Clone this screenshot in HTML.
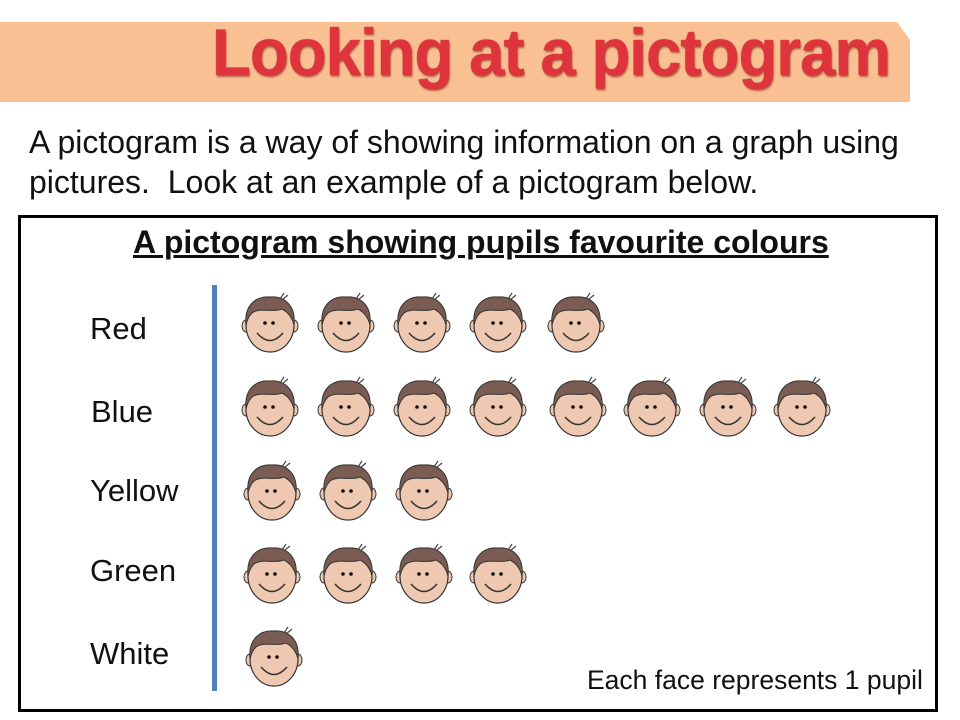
<!DOCTYPE html>
<html><head><meta charset="utf-8"><style>
body{margin:0;width:960px;height:720px;background:#fff;position:relative;overflow:hidden;font-family:"Liberation Sans",Arial,sans-serif}
.ban{position:absolute;left:0;top:22px;width:910px;height:80px;background:#f9c193;clip-path:polygon(0 0,897px 0,910px 18px,910px 80px,0 80px)}
.title{position:absolute;left:212px;top:14px;font-family:"Liberation Sans",sans-serif;font-weight:bold;font-size:66px;color:#e0343c;letter-spacing:-1px;text-shadow:0 0 1px #a01018,1px 2px 2px rgba(120,0,0,.5);transform:scaleX(0.963);transform-origin:left;white-space:nowrap}
.intro{position:absolute;left:29px;top:122px;font-size:32px;line-height:40px;color:#111;white-space:nowrap}
.box{position:absolute;left:18px;top:215px;width:914px;height:491px;border:3px solid #000}
.ct{position:absolute;left:133px;top:224px;font-size:32px;font-weight:bold;text-decoration:underline;color:#111;white-space:nowrap}
.lab{position:absolute;font-size:31px;color:#111}
.vl{position:absolute;left:212px;top:285px;width:5px;height:406px;background:#4f81bd}
.note{position:absolute;left:587px;top:665px;font-size:26.5px;color:#111;white-space:nowrap}
svg.f{position:absolute;width:60px;height:62px}
</style></head><body>
<div class="ban"></div>
<div class="title">Looking at a pictogram</div>
<div class="intro">A pictogram is a way of showing information on a graph using<br>pictures.&nbsp; Look at an example of a pictogram below.</div>
<div class="box"></div>
<div class="ct">A pictogram showing pupils favourite colours</div>
<div class="vl"></div>
<div class="lab" style="left:90px;top:311px">Red</div>
<div class="lab" style="left:91px;top:394px">Blue</div>
<div class="lab" style="left:90px;top:473px">Yellow</div>
<div class="lab" style="left:90px;top:553px">Green</div>
<div class="lab" style="left:90px;top:636px">White</div>
<div class="note">Each face represents 1 pupil</div>
<svg width="0" height="0" style="position:absolute"><defs><g id="fc">
<ellipse cx="6" cy="35" rx="4" ry="6" fill="#eec8b0" stroke="#333" stroke-width="1"/>
<ellipse cx="54" cy="35" rx="4" ry="6" fill="#eec8b0" stroke="#333" stroke-width="1"/>
<ellipse cx="30" cy="34" rx="24" ry="27" fill="#eec8b0" stroke="#333" stroke-width="1.2"/>
<path d="M6 34 C4 14 16 5 30 6 C44 5 56 14 54 34 C52 26 48 21 42 18 C32 22 20 16 12 22 C9 25 7 29 6 34Z" fill="#7b5c52" stroke="#333" stroke-width="1"/>
<path d="M40 8 L44 2 M42 9 L48 4" stroke="#444" stroke-width="1.2"/>
<circle cx="25" cy="32" r="1.8" fill="#111"/><circle cx="33" cy="32" r="1.8" fill="#111"/>
<path d="M17 42 Q30 57 43 42" fill="none" stroke="#333" stroke-width="1.5"/>
</g></defs></svg>
<svg class="f" style="left:240px;top:291px" viewBox="0 0 60 62"><use href="#fc"/></svg>
<svg class="f" style="left:316px;top:291px" viewBox="0 0 60 62"><use href="#fc"/></svg>
<svg class="f" style="left:392px;top:291px" viewBox="0 0 60 62"><use href="#fc"/></svg>
<svg class="f" style="left:468px;top:291px" viewBox="0 0 60 62"><use href="#fc"/></svg>
<svg class="f" style="left:546px;top:291px" viewBox="0 0 60 62"><use href="#fc"/></svg>
<svg class="f" style="left:240px;top:375px" viewBox="0 0 60 62"><use href="#fc"/></svg>
<svg class="f" style="left:316px;top:375px" viewBox="0 0 60 62"><use href="#fc"/></svg>
<svg class="f" style="left:392px;top:375px" viewBox="0 0 60 62"><use href="#fc"/></svg>
<svg class="f" style="left:468px;top:375px" viewBox="0 0 60 62"><use href="#fc"/></svg>
<svg class="f" style="left:548px;top:375px" viewBox="0 0 60 62"><use href="#fc"/></svg>
<svg class="f" style="left:622px;top:375px" viewBox="0 0 60 62"><use href="#fc"/></svg>
<svg class="f" style="left:698px;top:375px" viewBox="0 0 60 62"><use href="#fc"/></svg>
<svg class="f" style="left:772px;top:375px" viewBox="0 0 60 62"><use href="#fc"/></svg>
<svg class="f" style="left:242px;top:459px" viewBox="0 0 60 62"><use href="#fc"/></svg>
<svg class="f" style="left:318px;top:459px" viewBox="0 0 60 62"><use href="#fc"/></svg>
<svg class="f" style="left:394px;top:459px" viewBox="0 0 60 62"><use href="#fc"/></svg>
<svg class="f" style="left:242px;top:542px" viewBox="0 0 60 62"><use href="#fc"/></svg>
<svg class="f" style="left:318px;top:542px" viewBox="0 0 60 62"><use href="#fc"/></svg>
<svg class="f" style="left:394px;top:542px" viewBox="0 0 60 62"><use href="#fc"/></svg>
<svg class="f" style="left:468px;top:542px" viewBox="0 0 60 62"><use href="#fc"/></svg>
<svg class="f" style="left:244px;top:625px" viewBox="0 0 60 62"><use href="#fc"/></svg>
</body></html>
